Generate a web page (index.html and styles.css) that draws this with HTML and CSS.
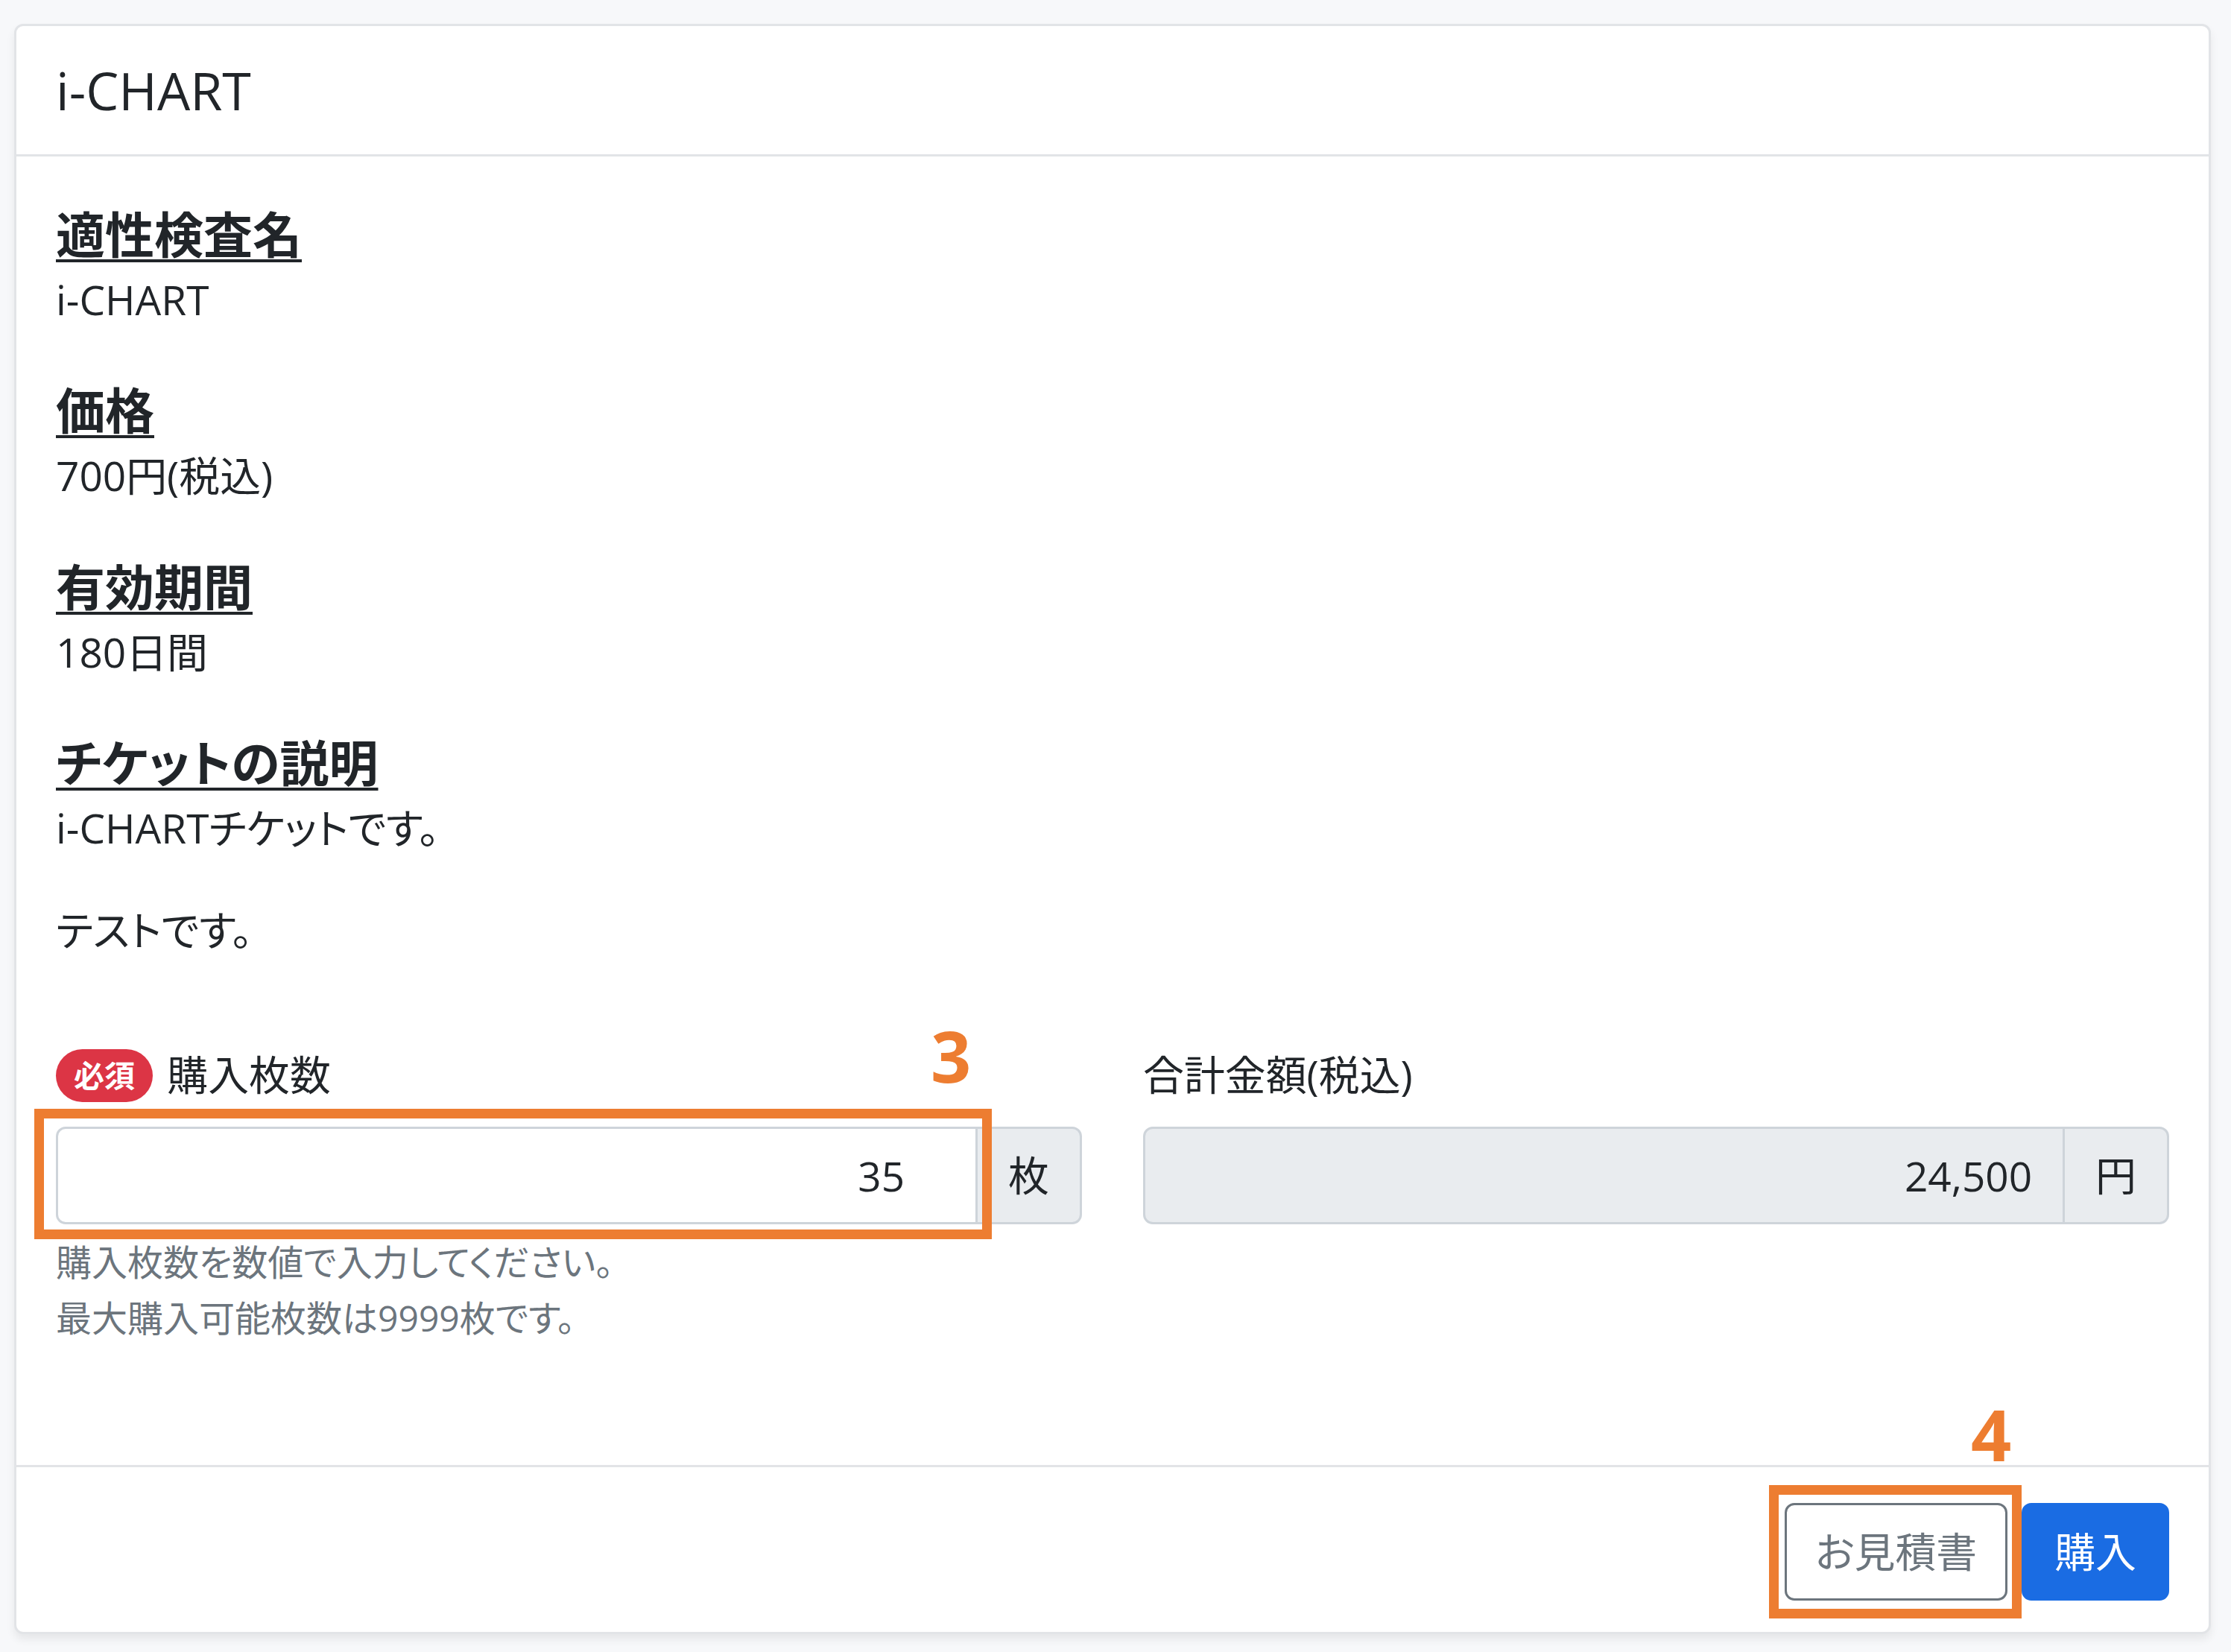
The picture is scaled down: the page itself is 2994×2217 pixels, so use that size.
FILE: index.html
```html
<!DOCTYPE html>
<html lang="ja">
<head>
<meta charset="utf-8">
<title>i-CHART</title>
<link rel="stylesheet" href="styles.css">
</head>
<body>
<main class="page">
  <section class="card">
    <header class="card-header">i-CHART</header>
    <div class="card-body">
      <div class="info">
        <h5 class="info-title">適性検査名</h5>
        <p class="info-text">i-CHART</p>
      </div>
      <div class="info">
        <h5 class="info-title">価格</h5>
        <p class="info-text">700円(税込)</p>
      </div>
      <div class="info">
        <h5 class="info-title">有効期間</h5>
        <p class="info-text">180日間</p>
      </div>
      <div class="info">
        <h5 class="info-title">チケットの説明</h5>
        <p class="info-text">i-CHARTチケットです。</p>
        <p class="info-text">テストです。</p>
      </div>
      <div class="form-row">
        <div class="form-col">
          <label class="form-label" for="qty"><span class="badge-required">必須</span> 購入枚数</label>
          <div class="input-group">
            <input class="field" id="qty" type="text" value="35">
            <span class="addon">枚</span>
            <span class="mark-box mark-box-qty"></span>
            <span class="mark-num mark-num-3">3</span>
          </div>
          <div class="form-help">購入枚数を数値で入力してください。<br>最大購入可能枚数は9999枚です。</div>
        </div>
        <div class="form-col">
          <label class="form-label" for="total">合計金額(税込)</label>
          <div class="input-group">
            <input class="field field-readonly" id="total" type="text" value="24,500" readonly>
            <span class="addon">円</span>
          </div>
        </div>
      </div>
    </div>
    <footer class="card-footer">
      <span class="annot-wrap">
        <button class="btn btn-outline" type="button">お見積書</button>
        <span class="mark-box mark-box-quote"></span>
        <span class="mark-num mark-num-4">4</span>
      </span>
      <button class="btn btn-primary" type="button">購入</button>
    </footer>
  </section>
</main>
</body>
</html>
```

FILE: styles.css
```css
html, body {
  margin: 0;
  padding: 0;
}

body {
  background: #f7f8fa;
  color: #212529;
  font-family: "Open Sans", "Noto Sans CJK JP", sans-serif;
  font-size: 54.9px;
  line-height: 1.5;
  font-feature-settings: "palt";
}

.page {
  padding: 32px 27px 32px 19px;
}

.card {
  background: #fff;
  border: 3px solid #e2e4e7;
  border-radius: 12px;
  box-shadow: 0 7px 12px rgba(0, 0, 0, 0.07);
}

.card-header {
  height: 175px;
  box-sizing: border-box;
  display: flex;
  align-items: center;
  padding: 0 53px;
  border-bottom: 3px solid #e2e4e7;
  font-size: 70px;
  line-height: 1.2;
  font-weight: 500;
}

.card-body {
  padding: 52px 53px 0;
}

.info-title {
  margin: 0 0 6px;
  padding-top: 11px;
  font-size: 66px;
  line-height: 82px;
  font-weight: 700;
  text-decoration: underline;
  text-decoration-thickness: 4px;
  text-underline-offset: 8px;
}

.info-text {
  margin: 0 0 55px;
}

.form-row {
  display: grid;
  grid-template-columns: 1fr 1fr;
  column-gap: 82px;
  margin-top: 111px;
  margin-bottom: 160px;
}

.form-label {
  display: block;
  margin-bottom: 29px;
}

.badge-required {
  display: inline-block;
  background: #dc3545;
  color: #fff;
  font-size: 41px;
  font-weight: 700;
  line-height: 1;
  padding: 15px 24px;
  margin-right: 5px;
  border-radius: 999px;
  vertical-align: 4px;
}

.input-group {
  position: relative;
  display: flex;
  height: 131px;
}

.field {
  flex: 1;
  min-width: 0;
  box-sizing: border-box;
  height: 131px;
  margin: 0;
  padding: 20px 95px 20px 41px;
  border: 3px solid #ced4da;
  border-radius: 13px 0 0 13px;
  background: #fff;
  color: #212529;
  font: inherit;
  text-align: right;
  outline: none;
}

.field-readonly {
  background: #e9ecef;
  padding-right: 41px;
}

.addon {
  display: flex;
  align-items: center;
  box-sizing: border-box;
  padding: 0 41px;
  margin-left: -3px;
  border: 3px solid #ced4da;
  border-radius: 0 13px 13px 0;
  background: #e9ecef;
  color: #212529;
}

.form-help {
  margin-top: 14px;
  font-size: 48px;
  line-height: 1.55;
  color: #6c757d;
}

.card-footer {
  display: flex;
  justify-content: flex-end;
  align-items: center;
  gap: 19px;
  padding: 48px 53px 42px;
  border-top: 3px solid #e2e4e7;
}

.annot-wrap {
  position: relative;
  display: inline-flex;
}

.btn {
  box-sizing: border-box;
  height: 131px;
  margin: 0;
  padding: 0 38px;
  border: 3px solid transparent;
  border-radius: 13px;
  font: inherit;
  cursor: pointer;
}

.btn-outline {
  background: #fff;
  border-color: #6c757d;
  color: #6c757d;
}

.btn-primary {
  background: #1a6ce3;
  border-color: #1a6ce3;
  color: #fff;
  padding: 0 41px;
}

.mark-box {
  position: absolute;
  box-sizing: border-box;
  border: 13px solid #ed7d31;
  pointer-events: none;
}

.mark-box-qty {
  left: -29px;
  top: -24px;
  width: 1285px;
  height: 175px;
}

.mark-box-quote {
  left: -21px;
  top: -24px;
  right: -19px;
  bottom: -24px;
}

.mark-num {
  position: absolute;
  color: #ed7d31;
  font-family: "Open Sans", sans-serif;
  font-weight: 700;
  font-size: 95px;
  line-height: 1;
}

.mark-num-3 {
  left: 1174px;
  top: -143px;
}

.mark-num-4 {
  left: 250px;
  top: -140px;
}
```
